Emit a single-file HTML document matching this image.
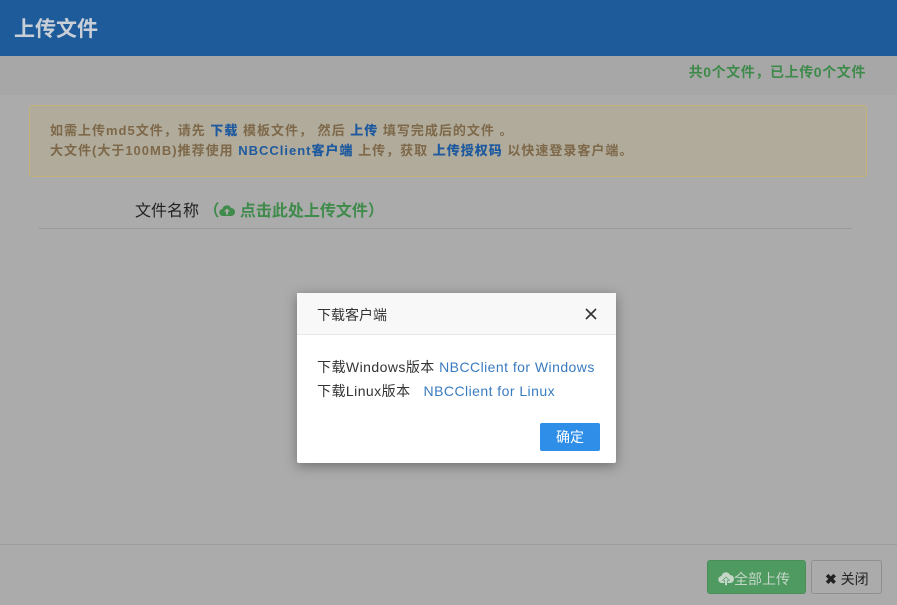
<!DOCTYPE html>
<html><head><meta charset="utf-8"><style>
*{margin:0;padding:0;box-sizing:border-box}
body{width:897px;height:605px;overflow:hidden;background:#ababab;font-family:"Liberation Sans","Noto Sans CJK SC",sans-serif;position:relative}
.hdr{position:absolute;left:0;top:0;width:897px;height:56px;background:#1e5b9a;color:#c9cfd6;font-size:21px;font-weight:bold;padding:13px 14px}
.band{position:absolute;left:0;top:56px;width:897px;height:39px;background:#a7a7a7}
.cnt{position:absolute;right:31px;top:62px;color:#3d8a4a;font-size:14px;font-weight:bold;letter-spacing:.6px}
.alert{position:absolute;left:29px;top:105px;width:838px;height:72px;background:#b0ab9b;border:1px solid #c3b27a;border-radius:3px;padding:15px 20px;color:#7e6849;font-size:13px;font-weight:bold;line-height:20px;letter-spacing:1px}
.alert b{color:#1f5a9e}
.fn{position:absolute;left:135px;top:197px;font-size:16px;color:#222}
.fn span{color:#3f8b4c;font-weight:bold}
.line{position:absolute;left:39px;top:228px;width:813px;height:1px;background:#999}
.fline{position:absolute;left:0;top:544px;width:897px;height:1px;background:#9e9e9e}
.b1{position:absolute;left:707px;top:560px;width:99px;height:34px;background:#4f9a61;border:1px solid #4a8e5a;border-radius:3px;color:#c4d7c8;font-size:14px;padding:8px 0 0 10px}
.b2{position:absolute;left:811px;top:560px;width:71px;height:34px;border:1px solid #8f8f8f;border-radius:3px;color:#222;font-size:14px;padding:8px 0 0 13px}
.dlg{position:absolute;left:297px;top:293px;width:319px;height:170px;background:#fff;border-radius:2px;box-shadow:0 3px 12px rgba(0,0,0,.35)}
.dh{height:42px;background:#f8f8f8;border-bottom:1px solid #e8e8e8;padding:12px 20px;font-size:14px;color:#333;position:relative}
.x{position:absolute;right:19px;top:15px}
.db{padding:20px 20px 0;font-size:14px;color:#333;line-height:24px;letter-spacing:.45px}
.db a{color:#3a7bbf;text-decoration:none}
.ok{position:absolute;left:243px;top:130px;width:60px;height:28px;background:#2f8ee8;border-radius:2px;color:#fff;font-size:14px;text-align:center;line-height:28px}
</style></head><body>
<div class="hdr">上传文件</div>
<div class="band"></div>
<div class="cnt">共0个文件，已上传0个文件</div>
<div class="alert">如需上传md5文件，请先 <b>下载</b> 模板文件， 然后 <b>上传</b> 填写完成后的文件 。<br>大文件(大于100MB)推荐使用 <b>NBCClient客户端</b> 上传，获取 <b>上传授权码</b> 以快速登录客户端。</div>
<div class="fn">文件名称 <span>（<svg width="16" height="13" viewBox="0 0 16 13" style="vertical-align:-1px"><path d="M4 12a3.5 3.5 0 0 1-.5-7A4.5 4.5 0 0 1 12 4a3.5 3.5 0 0 1 0 8z" fill="#3f8b4c"/><path d="M8 4.5l-3 3h2v3h2v-3h2z" fill="#ababab"/></svg> 点击此处上传文件）</span></div>
<div class="line"></div>
<div class="fline"></div>
<div class="b1"><svg width="16" height="14" viewBox="0 0 16 14" style="vertical-align:-2px"><path d="M4 11a3.5 3.5 0 0 1-.5-7A4.5 4.5 0 0 1 12 3a3.5 3.5 0 0 1 0 8z" fill="#c4d7c8"/><path d="M8 5l-3.5 3.5h2.2v5h2.6v-5h2.2z" fill="#c4d7c8" stroke="#4f9a61" stroke-width=".6"/></svg>全部上传</div>
<div class="b2"><b>✖</b> 关闭</div>
<div class="dlg">
<div class="dh">下载客户端<svg class="x" width="12" height="12" viewBox="0 0 12 12"><path d="M1 1L11 11M11 1L1 11" stroke="#333" stroke-width="1.6"/></svg></div>
<div class="db">下载Windows版本 <a>NBCClient for Windows</a><br>下载Linux版本 &nbsp; <a>NBCClient for Linux</a></div>
<div class="ok">确定</div>
</div>
</body></html>
